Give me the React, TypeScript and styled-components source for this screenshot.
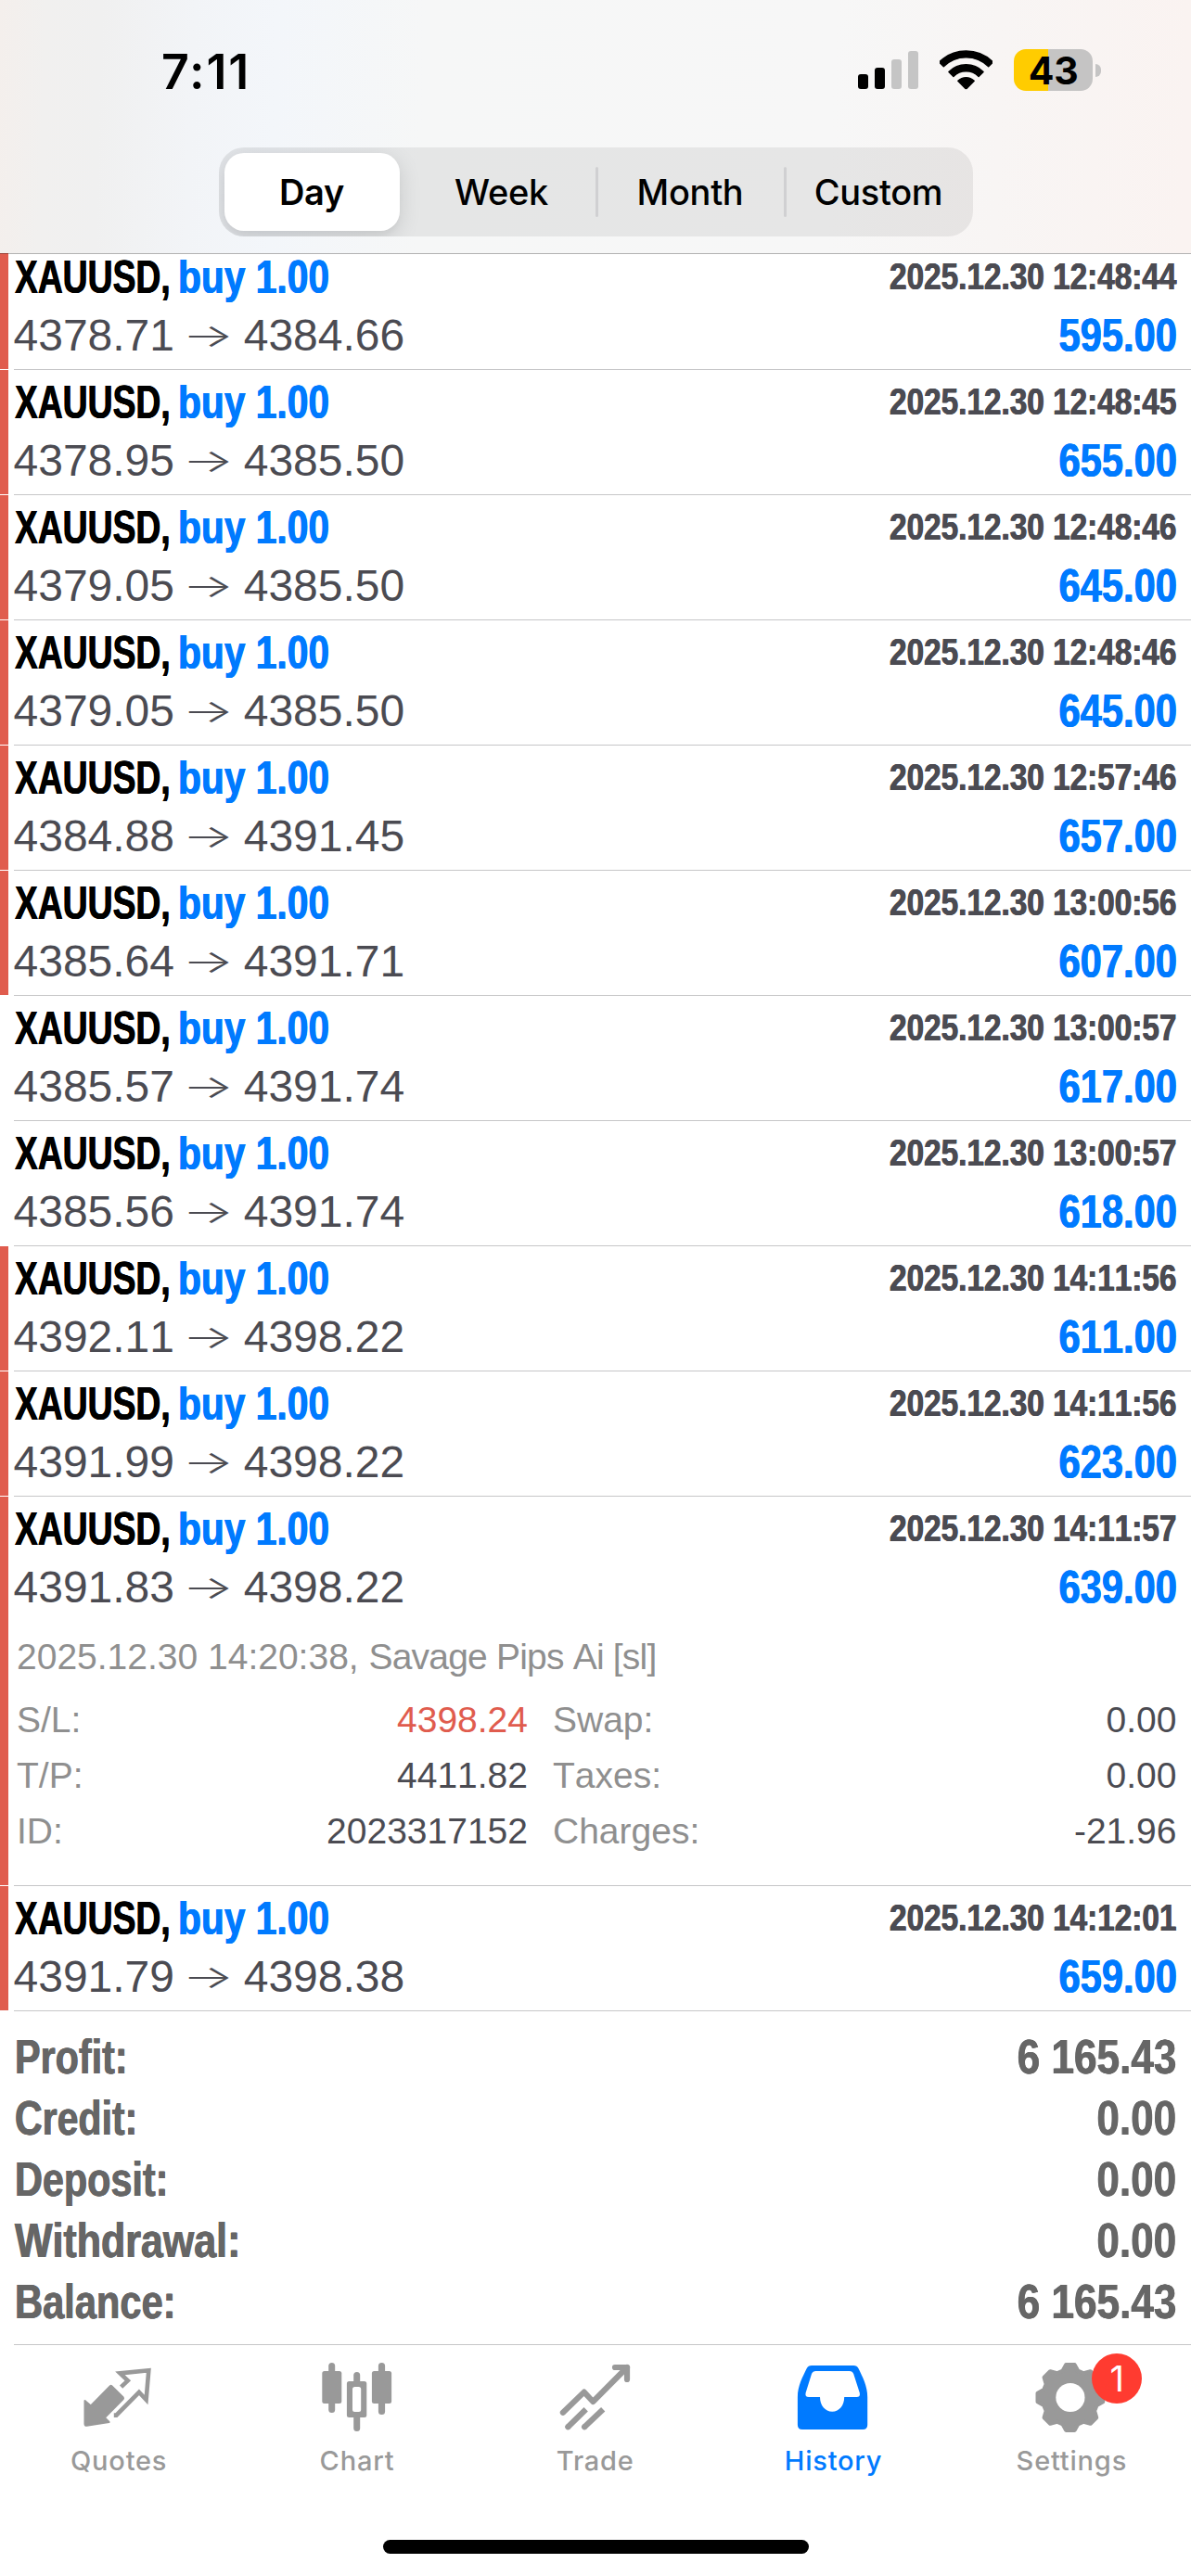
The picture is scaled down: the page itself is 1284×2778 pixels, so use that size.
import React from "react";
import styled, { createGlobalStyle } from "styled-components";

const GlobalStyle = createGlobalStyle`
  * { box-sizing: border-box; }
  body { margin: 0; background: #fff; }
`;

const helvetica = `"Liberation Sans", Arial, sans-serif`;
const system = `Inter, "Liberation Sans", sans-serif`;
const BLUE = "#007aff";
const RED = "#e05c4e";
const INK = "#4b4b52";
const LINE = "#c6c6c8";
const MUTED = "#999999";

const Screen = styled.div`
  width: 1284px;
  height: 2778px;
  overflow: hidden;
  display: flex;
  flex-direction: column;
  background: #fff;
  font-kerning: none;
`;

/* ---------- header ---------- */

const Header = styled.header`
  position: relative;
  z-index: 1;
  flex: none;
  height: 273px;
  display: flex;
  flex-direction: column;
  align-items: center;
  background: linear-gradient(
    92deg,
    #f4efec 0px,
    #f1f0ef 50px,
    #f0f0f0 110px,
    #f2f4f7 210px,
    #f3f6fa 300px,
    #f6f7f7 460px,
    #f7f7f7 900px,
    #f8f5f4 1080px,
    #faf3f1 1284px
  );
  &::after {
    content: "";
    position: absolute;
    left: 0;
    right: 0;
    top: 100%;
    height: 1px;
    background: rgba(0, 0, 0, 0.3);
  }
`;

const StatusBar = styled.div`
  width: 100%;
  height: 159px;
  padding: 53px 97px 0 174px;
  display: flex;
  align-items: flex-start;
  justify-content: space-between;
`;

const Clock = styled.div`
  padding-top: 1px;
  font: 600 52px/48px ${system};
  letter-spacing: 1.8px;
  color: #000;
`;

const StatusIcons = styled.div`
  display: flex;
  align-items: flex-start;
  gap: 23px;
`;

const Battery = styled.div`
  display: flex;
  align-items: center;
  gap: 3px;
`;

const BatteryBody = styled.div`
  width: 85px;
  height: 45px;
  border-radius: 13px;
  display: flex;
  align-items: center;
  justify-content: center;
  background: linear-gradient(90deg, #ffcc00 37px, #c5c4c4 37px);
  font: 700 41px/46px ${system};
  letter-spacing: -0.3px;
  color: #000;
`;

const BatteryCap = styled.div`
  width: 6px;
  height: 14px;
  border-radius: 0 7px 7px 0;
  background: #c5c4c4;
`;

const Segmented = styled.div`
  width: 813px;
  height: 96px;
  padding: 6px 0 6px 6px;
  border-radius: 27px;
  overflow: hidden;
  display: grid;
  grid-template-columns: 197px 204px 203px 203px;
  background: rgba(0, 0, 0, 0.067);
`;

const Segment = styled.button<{ $active?: boolean; $divided?: boolean }>`
  position: relative;
  border: 0;
  padding: 0;
  margin-right: ${(p) => (p.$active ? 8 : 0)}px;
  border-radius: 21px;
  font: ${(p) => (p.$active ? 600 : 480)} 38px/84px ${system};
  letter-spacing: -0.3px;
  color: #000;
  background: ${(p) => (p.$active ? "#fff" : "transparent")};
  box-shadow: ${(p) => (p.$active ? "0 6px 24px rgba(0,0,0,.12), 0 6px 6px rgba(0,0,0,.03)" : "none")};
  &::before {
    content: "";
    display: ${(p) => (p.$divided ? "block" : "none")};
    position: absolute;
    left: -1px;
    top: 15px;
    width: 3px;
    height: 54px;
    border-radius: 2px;
    background: #d0d0d2;
  }
`;

/* ---------- condensed type ---------- */

const Condensed = styled.span<{ $scale: number; $right?: boolean }>`
  display: inline-block;
  font-family: ${helvetica};
  font-weight: 700;
  white-space: pre;
  transform: scaleX(${(p) => p.$scale});
  transform-origin: ${(p) => (p.$right ? "100%" : "0")} 50%;
  text-shadow: 0.5px 0 currentColor, -0.5px 0 currentColor;
`;

/* ---------- deals ---------- */

const Deals = styled.ul`
  margin: -9px 0 0;
  padding: 0;
  list-style: none;
  flex: none;
`;

const Deal = styled.li<{ $marked: boolean; $tall?: boolean }>`
  display: grid;
  grid-template-columns: 9px 6px 1fr;
  grid-template-rows: ${(p) => (p.$tall ? 419 : 134)}px 1px;
  &::before {
    content: "";
    background: ${(p) => (p.$marked ? RED : "transparent")};
  }
  &::after {
    content: "";
    grid-column: 3;
    background: ${LINE};
  }
`;

const DealBody = styled.div`
  grid-column: 3;
  padding: 5px 15.5px 0 0.5px;
  display: flex;
  flex-direction: column;
`;

const DealLine = styled.div<{ $second?: boolean }>`
  height: 60px;
  display: flex;
  justify-content: space-between;
  margin-top: ${(p) => (p.$second ? 3 : 0)}px;
`;

const Title = styled.div`
  display: flex;
  font-size: 50px;
  line-height: 60px;
`;

const SymbolCell = styled.div`
  width: 176px;
  color: #000;
`;

const Side = styled.div`
  color: ${BLUE};
`;

const Stamp = styled.div`
  font-size: 40px;
  line-height: 58px;
  color: ${INK};
`;

const Prices = styled.div`
  margin-left: -1px;
  font: 400 48px/60px ${helvetica};
  font-kerning: none;
  color: ${INK};
  white-space: pre;
  display: flex;
`;

const Arrow = styled.span`
  width: 74.7px;
  text-align: center;
  font: 300 48px/60px ${system};
  transform: translateX(-1px) scale(1.22, 0.72);
`;

const Amount = styled.div`
  font-size: 50px;
  line-height: 60px;
  color: ${BLUE};
`;

const Details = styled.div`
  padding: 14.5px 0 0 2.5px;
  font: 400 39px/60px ${helvetica};
  font-kerning: none;
  color: #8f8f8f;
`;

const Comment = styled.div`
  height: 68px;
`;

const CommentText = styled.span`
  letter-spacing: -0.8px;
`;

const Facts = styled.dl`
  margin: 0;
  display: grid;
  grid-template-columns: 551px 1fr;
  column-gap: 27px;
`;

const Fact = styled.div`
  display: flex;
  justify-content: space-between;
`;

const FactValue = styled.span<{ $alert?: boolean }>`
  color: ${(p) => (p.$alert ? RED : INK)};
`;

/* ---------- totals ---------- */

const Totals = styled.section`
  flex: none;
  height: 360px;
  margin-left: 15px;
  padding: 16px 15.5px 0 0.5px;
  border-bottom: 1px solid ${LINE};
  color: #666;
`;

const Total = styled.div`
  display: flex;
  justify-content: space-between;
  font-size: 52.5px;
  line-height: 66px;
  height: 66px;
`;

/* ---------- tab bar ---------- */

const TabBar = styled.nav`
  flex: none;
  height: 210px;
  display: grid;
  grid-template-columns: repeat(5, 1fr);
`;

const Tab = styled.a<{ $active?: boolean }>`
  display: flex;
  flex-direction: column;
  align-items: center;
  padding: 13px 0.5px 0 0;
  color: ${(p) => (p.$active ? BLUE : MUTED)};
  font: 500 29px/36px ${system};
  letter-spacing: 0.8px;
`;

const TabIcon = styled.div`
  position: relative;
  width: 90px;
  height: 90px;
  margin-bottom: 4px;
  svg {
    display: block;
    overflow: visible;
  }
`;

const Badge = styled.span`
  position: absolute;
  left: 67px;
  top: -4px;
  width: 54px;
  height: 54px;
  border-radius: 50%;
  background: #ff3b30;
  color: #fff;
  font: 400 38px/54px ${system};
  letter-spacing: 0;
  text-align: center;
`;

const HomeIndicator = styled.div`
  flex: none;
  align-self: center;
  width: 459px;
  height: 15px;
  border-radius: 8px;
  background: #000;
`;

/* ---------- drawings ---------- */

const SignalIcon = () => (
  <svg width="65" height="45" viewBox="925 53 65 45">
    <rect x="925" y="80" width="11" height="16" rx="3" />
    <rect x="943" y="73" width="11" height="23" rx="3" />
    <rect x="961" y="64" width="11" height="32" rx="3" fill="#c5c5c5" />
    <rect x="979" y="55" width="11" height="41" rx="3" fill="#c5c5c5" />
  </svg>
);

const wedge = (outer: number, inner: number) => {
  const k = Math.SQRT1_2;
  return `M${-outer * k} ${-outer * k}A${outer} ${outer} 0 0 1 ${outer * k} ${-outer * k}L${inner * k} ${-inner * k}A${inner} ${inner} 0 0 0 ${-inner * k} ${-inner * k}Z`;
};

const WifiIcon = () => (
  <svg width="57" height="45" viewBox="-28.5 -43 57 45" stroke="#000" strokeWidth="1.4" strokeLinejoin="round">
    <path d={wedge(41, 34.2)} />
    <path d={wedge(26.3, 19.2)} />
    <path d={wedge(12.3, 0.8)} />
  </svg>
);

const QuotesIcon = () => (
  <svg width="90" height="90" viewBox="0 0 90 90">
    <path
      d="M8.5 47L14.9 52.5L35.8 31.2Q36.6 30.4 37.4 31.2L49.6 43.2Q50.5 44.2 49.6 45.4L29.8 65.2L34.6 70L10.5 73.8Q8.5 74 8.5 72Z"
      fill="currentColor"
      stroke="currentColor"
      strokeWidth="2"
      strokeLinejoin="round"
    />
    <path
      d="M47.6 32.2L54.8 25.3L46.4 17.4L77.3 14.3L74.6 46L66.9 37.8L42.4 62.6H39.8"
      fill="none"
      stroke="currentColor"
      strokeWidth="4.6"
    />
  </svg>
);

const ChartIcon = () => (
  <svg width="90" height="90" viewBox="0 0 90 90" fill="currentColor">
    <rect x="14.2" y="6" width="7" height="54" rx="3.5" />
    <rect x="7.3" y="15" width="21" height="35" rx="2.5" />
    <rect x="67.9" y="6" width="7.2" height="56" rx="3.5" />
    <rect x="60.9" y="15" width="21.2" height="35" rx="2.5" />
    <rect x="41.2" y="16" width="7" height="14" rx="3.5" />
    <rect x="41.2" y="60" width="7" height="20" rx="3.5" />
    <path
      fillRule="evenodd"
      d="M36.4 26h16.4a2.5 2.5 0 0 1 2.5 2.5v34a2.5 2.5 0 0 1-2.5 2.5H36.4a2.5 2.5 0 0 1-2.5-2.5v-34a2.5 2.5 0 0 1 2.5-2.5ZM42.5 32a2.5 2.5 0 0 0-2.5 2.5v22a2.5 2.5 0 0 0 2.5 2.5h4.2a2.5 2.5 0 0 0 2.5-2.5v-22a2.5 2.5 0 0 0-2.5-2.5Z"
    />
  </svg>
);

const TradeIcon = () => (
  <svg width="90" height="90" viewBox="0 0 90 90" fill="none" stroke="currentColor" strokeWidth="6.2">
    <path d="M9.9 59.8L32.7 37.6L42.3 48L79 11" strokeLinecap="round" strokeLinejoin="round" />
    <path d="M66 11H79V24" strokeLinecap="round" strokeLinejoin="round" />
    <path d="M15.3 75.3L15.4 75.2M33.1 75.3L33.2 75.2" strokeLinecap="round" />
    <path d="M15.3 75.3L34.7 56.2M33.1 75.3L53.2 56.2" />
  </svg>
);

const HistoryIcon = () => (
  <svg width="90" height="90" viewBox="0 0 90 90" fill="currentColor">
    <path
      fillRule="evenodd"
      d="M21 9H66.2Q70 9 71.4 12C76 21.5 81.2 31 81.2 43V73Q81.2 78 76.2 78H10.9Q5.9 78 5.9 73V43C5.9 31 11.2 21.5 15.8 12Q17.2 9 21 9ZM25.5 15Q22.3 15 21 18L14.6 38.5Q13.6 43 18 43H30C30 52 35.5 58.7 43.2 58.7S56.2 52 56.2 43H69.4Q73.8 43 72.8 38.5L66.2 18Q65 15 61.8 15Z"
    />
  </svg>
);

const gearPath = (() => {
  const points: string[] = [];
  for (let tooth = 0; tooth < 8; tooth += 1) {
    const a = (tooth * Math.PI) / 4;
    const place = (x: number, y: number) =>
      `${(x * Math.cos(a) - y * Math.sin(a)).toFixed(2)} ${(x * Math.sin(a) + y * Math.cos(a)).toFixed(2)}`;
    points.push(place(-8.2, -28.6), place(-4.6, -35.2), place(4.6, -35.2), place(8.2, -28.6));
  }
  return `M${points.join("L")}Z`;
})();

const SettingsIcon = () => (
  <svg width="90" height="90" viewBox="0 0 90 90">
    <g transform="translate(43.9 43.5)">
      <path d={gearPath} fill="currentColor" stroke="currentColor" strokeWidth="4.4" strokeLinejoin="round" />
      <circle r="15.6" fill="#fff" />
    </g>
  </svg>
);

/* ---------- data ---------- */

type DealRow = {
  open: string;
  close: string;
  time: string;
  profit: string;
  marked: boolean;
  expanded?: boolean;
};

const deals: DealRow[] = [
  { open: "4378.71", close: "4384.66", time: "12:48:44", profit: "595.00", marked: true },
  { open: "4378.95", close: "4385.50", time: "12:48:45", profit: "655.00", marked: true },
  { open: "4379.05", close: "4385.50", time: "12:48:46", profit: "645.00", marked: true },
  { open: "4379.05", close: "4385.50", time: "12:48:46", profit: "645.00", marked: true },
  { open: "4384.88", close: "4391.45", time: "12:57:46", profit: "657.00", marked: true },
  { open: "4385.64", close: "4391.71", time: "13:00:56", profit: "607.00", marked: true },
  { open: "4385.57", close: "4391.74", time: "13:00:57", profit: "617.00", marked: false },
  { open: "4385.56", close: "4391.74", time: "13:00:57", profit: "618.00", marked: false },
  { open: "4392.11", close: "4398.22", time: "14:11:56", profit: "611.00", marked: true },
  { open: "4391.99", close: "4398.22", time: "14:11:56", profit: "623.00", marked: true },
  { open: "4391.83", close: "4398.22", time: "14:11:57", profit: "639.00", marked: true, expanded: true },
  { open: "4391.79", close: "4398.38", time: "14:12:01", profit: "659.00", marked: true },
];

const facts = [
  { label: "S/L:", value: "4398.24", alert: true },
  { label: "Swap:", value: "0.00" },
  { label: "T/P:", value: "4411.82" },
  { label: "Taxes:", value: "0.00" },
  { label: "ID:", value: "2023317152" },
  { label: "Charges:", value: "-21.96" },
];

const totals = [
  { label: "Profit:", value: "6 165.43", scale: 0.787 },
  { label: "Credit:", value: "0.00", scale: 0.782 },
  { label: "Deposit:", value: "0.00", scale: 0.788 },
  { label: "Withdrawal:", value: "0.00", scale: 0.818 },
  { label: "Balance:", value: "6 165.43", scale: 0.793 },
];

const tabs = [
  { label: "Quotes", Icon: QuotesIcon },
  { label: "Chart", Icon: ChartIcon },
  { label: "Trade", Icon: TradeIcon },
  { label: "History", Icon: HistoryIcon, active: true },
  { label: "Settings", Icon: SettingsIcon, badge: "1" },
];

export default function App() {
  return (
    <Screen>
      <GlobalStyle />
      <Header>
        <StatusBar>
          <Clock>7:11</Clock>
          <StatusIcons>
            <SignalIcon />
            <WifiIcon />
            <Battery>
              <BatteryBody>43</BatteryBody>
              <BatteryCap />
            </Battery>
          </StatusIcons>
        </StatusBar>
        <Segmented>
          <Segment $active>Day</Segment>
          <Segment>Week</Segment>
          <Segment $divided>Month</Segment>
          <Segment $divided>Custom</Segment>
        </Segmented>
      </Header>

      <Deals>
        {deals.map((deal, i) => (
          <Deal key={i} $marked={deal.marked} $tall={deal.expanded}>
            <DealBody>
              <DealLine>
                <Title>
                  <SymbolCell>
                    <Condensed $scale={0.745}>XAUUSD,</Condensed>
                  </SymbolCell>
                  <Side>
                    <Condensed $scale={0.815}>buy 1.00</Condensed>
                  </Side>
                </Title>
                <Stamp>
                  <Condensed $scale={0.833} $right>{`2025.12.30 ${deal.time}`}</Condensed>
                </Stamp>
              </DealLine>
              <DealLine $second>
                <Prices>
                  <span>{deal.open}</span>
                  <Arrow>→</Arrow>
                  <span>{deal.close}</span>
                </Prices>
                <Amount>
                  <Condensed $scale={0.833} $right>
                    {deal.profit}
                  </Condensed>
                </Amount>
              </DealLine>
              {deal.expanded && (
                <Details>
                  <Comment>
                    2025.12.30 14:20:38, <CommentText>Savage Pips Ai [sl]</CommentText>
                  </Comment>
                  <Facts>
                    {facts.map((fact) => (
                      <Fact key={fact.label}>
                        <span>{fact.label}</span>
                        <FactValue $alert={fact.alert}>{fact.value}</FactValue>
                      </Fact>
                    ))}
                  </Facts>
                </Details>
              )}
            </DealBody>
          </Deal>
        ))}
      </Deals>

      <Totals>
        {totals.map(({ label, value, scale }) => (
          <Total key={label}>
            <Condensed $scale={scale}>{label}</Condensed>
            <Condensed $scale={0.84} $right>
              {value}
            </Condensed>
          </Total>
        ))}
      </Totals>

      <TabBar>
        {tabs.map(({ label, Icon, active, badge }) => (
          <Tab key={label} $active={active}>
            <TabIcon>
              <Icon />
              {badge && <Badge>{badge}</Badge>}
            </TabIcon>
            {label}
          </Tab>
        ))}
      </TabBar>
      <HomeIndicator />
    </Screen>
  );
}
